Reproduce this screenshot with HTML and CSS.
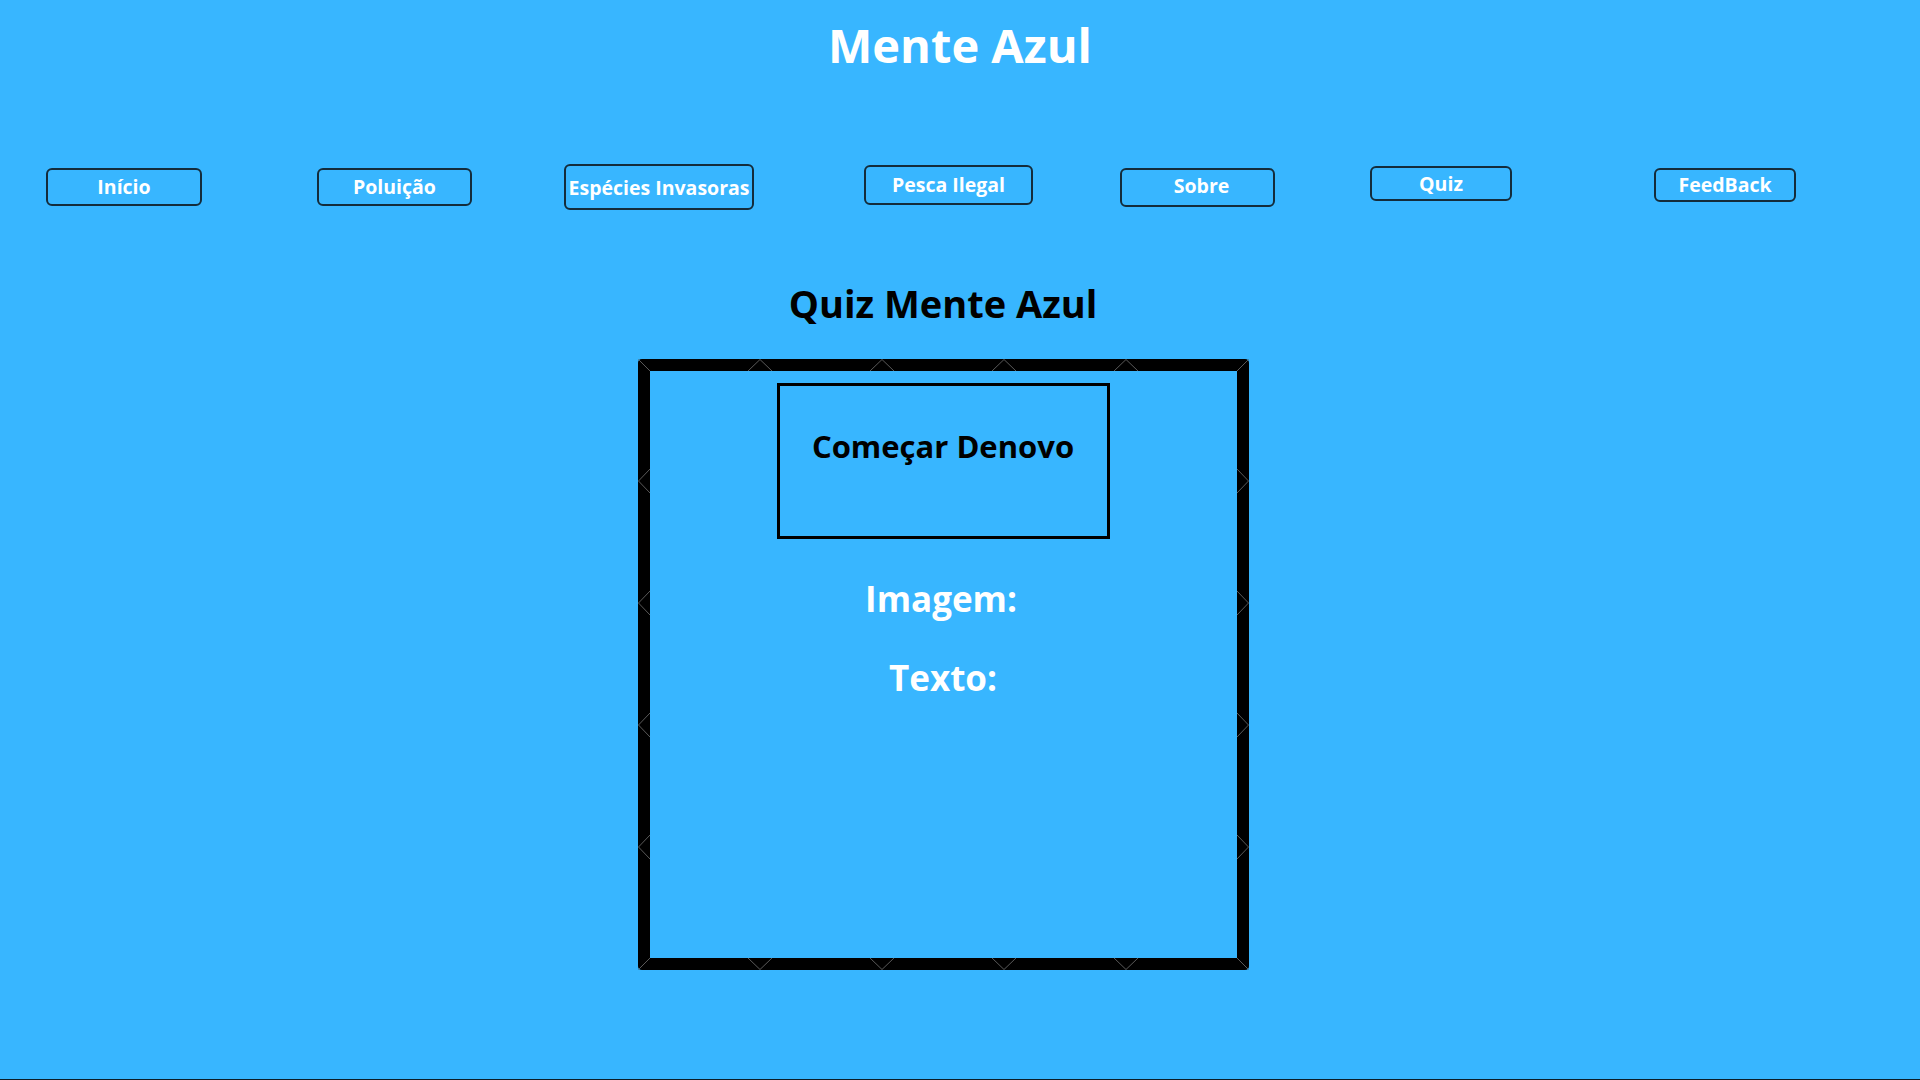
FILE: index.html
```html
<!DOCTYPE html>
<html lang="pt-BR">
<head>
<meta charset="utf-8">
<title>Mente Azul - Quiz</title>
<link rel="stylesheet" href="styles.css">
</head>
<body>
<div class="page">
  <header class="header">
    <h1 class="site-title">Mente Azul</h1>
    <nav class="nav">
      <a class="nav-btn btn-inicio" href="#">Início</a>
      <a class="nav-btn btn-poluicao" href="#">Poluição</a>
      <a class="nav-btn btn-especies" href="#">Espécies Invasoras</a>
      <a class="nav-btn btn-pesca" href="#">Pesca Ilegal</a>
      <a class="nav-btn btn-sobre" href="#">Sobre</a>
      <a class="nav-btn btn-quiz" href="#">Quiz</a>
      <a class="nav-btn btn-feedback" href="#">FeedBack</a>
    </nav>
  </header>
  <main class="main">
    <h2 class="quiz-title">Quiz Mente Azul</h2>
    <section class="quiz-box">
      <div class="restart-box">
        <h3 class="restart-text">Começar Denovo</h3>
      </div>
      <p class="quiz-label label-imagem">Imagem:</p>
      <p class="quiz-label label-texto">Texto:</p>
      <svg class="seams" width="611" height="611" viewBox="0 0 611 611" aria-hidden="true">
        <g fill="none" stroke="#5a5a5a" stroke-width="1">
          <path d="M0.5 0.5 L12 12 M610.5 0.5 L599 12 M0.5 610.5 L12 599 M610.5 610.5 L599 599"/>
          <path d="M110 12 L122 0.5 L134 12 M232 12 L244 0.5 L256 12 M354 12 L366 0.5 L378 12 M476 12 L488 0.5 L500 12"/>
          <path d="M110 599 L122 610.5 L134 599 M232 599 L244 610.5 L256 599 M354 599 L366 610.5 L378 599 M476 599 L488 610.5 L500 599"/>
          <path d="M12 110 L0.5 122 L12 134 M12 232 L0.5 244 L12 256 M12 354 L0.5 366 L12 378 M12 476 L0.5 488 L12 500"/>
          <path d="M599 110 L610.5 122 L599 134 M599 232 L610.5 244 L599 256 M599 354 L610.5 366 L599 378 M599 476 L610.5 488 L599 500"/>
        </g>
      </svg>
    </section>
  </main>
</div>
</body>
</html>
```
FILE: styles.css
```css
html, body {
  margin: 0;
  padding: 0;
}

body {
  background: #38b6ff;
  font-family: "Open Sans", "Noto Sans", "Liberation Sans", sans-serif;
  font-weight: 700;
}

.page {
  box-sizing: border-box;
  height: 1080px;
  border-bottom: 1px solid #0b1d28;
  overflow: hidden;
}

.header {
  display: flex;
  flex-direction: column;
}

.site-title {
  margin: 0;
  padding-top: 14px;
  font-size: 47px;
  line-height: 62px;
  color: #ffffff;
  text-align: center;
}

.nav {
  display: flex;
  align-items: flex-start;
  margin-top: 88px;
  padding-left: 46px;
  height: 46px;
}

.nav-btn {
  box-sizing: border-box;
  display: flex;
  align-items: center;
  justify-content: center;
  border: 2px solid #142c3b;
  border-radius: 6px;
  color: #ffffff;
  text-decoration: none;
  font-size: 19.5px;
  white-space: nowrap;
  padding-bottom: 2px;
}

.btn-inicio { width: 156px; height: 38px; margin-top: 4px; }
.btn-poluicao { width: 155px; height: 38px; margin-top: 4px; margin-left: 115px; }
.btn-especies { width: 190px; height: 46px; margin-left: 92px; padding-top: 2px; }
.btn-pesca { width: 169px; height: 40px; margin-top: 1px; margin-left: 110px; }
.btn-sobre { width: 155px; height: 39px; margin-top: 4px; margin-left: 87px; padding-bottom: 4px; padding-left: 8px; }
.btn-quiz { width: 142px; height: 35px; margin-top: 2px; margin-left: 95px; padding-bottom: 1px; }
.btn-feedback { width: 142px; height: 34px; margin-top: 4px; margin-left: 142px; }

.main {
  width: 1886px;
  display: flex;
  flex-direction: column;
  align-items: center;
}

.quiz-title {
  margin: 68px 0 0 0;
  font-size: 38px;
  line-height: 50px;
  color: #000000;
}

.quiz-box {
  position: relative;
  box-sizing: border-box;
  width: 611px;
  height: 611px;
  margin-top: 31px;
  border: 12px solid #000000;
  border-radius: 4px;
  padding-top: 12px;
  display: flex;
  flex-direction: column;
  align-items: center;
}

.restart-box {
  box-sizing: border-box;
  width: 333px;
  height: 156px;
  border: 3px solid #000000;
  padding-top: 39px;
  text-align: center;
}

.restart-text {
  margin: 0;
  font-size: 31px;
  line-height: 42px;
  color: #000000;
}

.quiz-label {
  margin: 0;
  font-size: 35px;
  line-height: 46px;
  color: #ffffff;
}

.label-imagem { margin-top: 37px; margin-right: 4px; }
.label-texto { margin-top: 33px; }

.seams {
  position: absolute;
  top: -12px;
  left: -12px;
  pointer-events: none;
}
```
